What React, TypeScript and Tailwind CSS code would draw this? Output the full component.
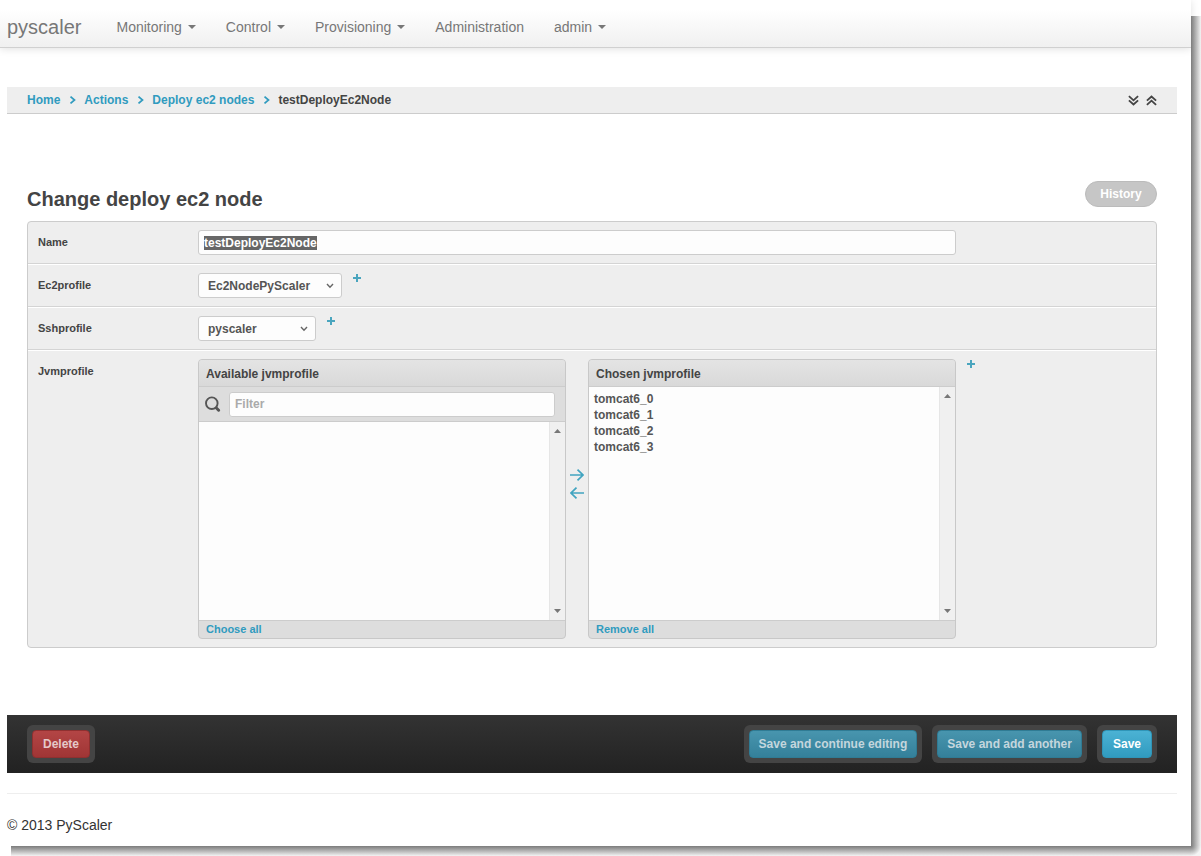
import { useEffect, useRef, type ReactNode } from "react";

const navItems = [
  { label: "Monitoring", menu: true },
  { label: "Control", menu: true },
  { label: "Provisioning", menu: true },
  { label: "Administration", menu: false },
  { label: "admin", menu: true },
];

const crumbs = ["Home", "Actions", "Deploy ec2 nodes"];
const chosen = ["tomcat6_0", "tomcat6_1", "tomcat6_2", "tomcat6_3"];

function Navbar() {
  return (
    <nav className="flex h-12 items-center gap-5 border-b border-[#d0d0d0] bg-linear-to-b from-white from-20% to-[#f0f0f0] pt-[7px] pl-[7px] text-[#777] shadow-[0_1px_8px_rgba(0,0,0,0.12)]">
      <a href="#" className="text-xl leading-10">
        pyscaler
      </a>
      <ul className="flex">
        {navItems.map((item) => (
          <li key={item.label}>
            <a href="#" className="flex items-center gap-1.5 px-[15px] text-sm leading-10">
              {item.label}
              {item.menu && (
                <svg width="8" height="4" viewBox="0 0 8 4" fill="#777" aria-hidden="true">
                  <path d="M0 0h8L4 4z" />
                </svg>
              )}
            </a>
          </li>
        ))}
      </ul>
    </nav>
  );
}

function DoubleChevron({ up }: { up?: boolean }) {
  return (
    <svg width="11" height="11" viewBox="0 0 12 12" fill="none" stroke="#444" strokeWidth="2" aria-hidden="true">
      <path d={up ? "M1 6.2 6 1.6l5 4.6M1 10.8 6 6.2l5 4.6" : "M1 1.2 6 5.8l5-4.6M1 5.8l5 4.6 5-4.6"} />
    </svg>
  );
}

function Breadcrumbs() {
  return (
    <div className="flex h-[27px] items-center justify-between border-b border-[#ccc] bg-[#eee] px-5 text-xs font-bold">
      <ol className="flex items-center">
        {crumbs.map((c) => (
          <li key={c} className="flex items-center">
            <a href="#" className="text-[#309bbf]">
              {c}
            </a>
            <svg className="mr-2 ml-[9px]" width="7" height="8" viewBox="0 0 7 8" fill="none" stroke="#309bbf" strokeWidth="1.7" aria-hidden="true">
              <path d="M1.5 .6 5.5 4 1.5 7.4" />
            </svg>
          </li>
        ))}
        <li className="text-[#444]">testDeployEc2Node</li>
      </ol>
      <div className="flex gap-[7px]">
        <button type="button" aria-label="Expand all">
          <DoubleChevron />
        </button>
        <button type="button" aria-label="Collapse all">
          <DoubleChevron up />
        </button>
      </div>
    </div>
  );
}

function Row({ label, id, children }: { label: string; id: string; children: ReactNode }) {
  return (
    <div className="flex border-t border-b border-t-white border-b-[#d4d4d4] px-2.5 py-2 first:border-t-0 last:border-b-0">
      <label htmlFor={id} className="w-40 shrink-0 pt-1 text-[11px] leading-4 font-bold text-[#444]">
        {label}
      </label>
      <div className="flex min-w-0 flex-1 items-start">{children}</div>
    </div>
  );
}

function AddLink({ label }: { label: string }) {
  return (
    <a href="#" aria-label={label} className="ml-[11px] shrink-0">
      <svg width="8" height="10" viewBox="0 0 8 10" fill="none" stroke="#4aa5be" strokeWidth="2" aria-hidden="true">
        <path d="M0 5h8M4 1v8" />
      </svg>
    </a>
  );
}

function DropDown({ id, value, className }: { id: string; value: string; className: string }) {
  return (
    <div className={`relative ${className}`}>
      <select
        id={id}
        defaultValue={value}
        className="block h-[25px] w-full appearance-none rounded-[3px] border border-[#ccc] bg-[#fdfdfd] px-[9px] text-xs font-bold text-[#555]"
      >
        <option>{value}</option>
      </select>
      <svg className="pointer-events-none absolute top-2.5 right-2" width="8" height="6" viewBox="0 0 8 6" fill="none" stroke="#666" strokeWidth="1.4" aria-hidden="true">
        <path d="M1 1 4 4.2 7 1" />
      </svg>
    </div>
  );
}

function ScrollTrack() {
  return (
    <div className="flex w-4 shrink-0 flex-col items-center justify-between border-l border-[#e6e6e6] bg-[#f0f0f0] py-[7px]" aria-hidden="true">
      <svg width="7" height="4" viewBox="0 0 7 4" fill="#777">
        <path d="M0 4h7L3.5 0z" />
      </svg>
      <svg width="7" height="4" viewBox="0 0 7 4" fill="#777">
        <path d="M0 0h7L3.5 4z" />
      </svg>
    </div>
  );
}

function ListPanel({
  id,
  title,
  action,
  options,
  filter,
}: {
  id: string;
  title: string;
  action: string;
  options: string[];
  filter?: boolean;
}) {
  return (
    <div className="flex h-[280px] max-w-[368px] min-w-0 flex-1 flex-col overflow-hidden rounded-[4px] border border-[#c8c8c8] bg-[#ddd]">
      <h2 className="h-[27px] shrink-0 border-b border-[#ccc] bg-linear-to-b from-[#e4e4e4] to-[#d9d9d9] px-[7px] text-xs leading-7 font-bold text-[#444]">
        {title}
      </h2>
      {filter && (
        <div className="flex h-[35px] shrink-0 items-center gap-2 border-b border-[#ccc] pr-2.5 pl-1.5">
          <svg className="shrink-0" width="16" height="16" viewBox="0 0 16 16" fill="none" stroke="#555" aria-hidden="true">
            <circle cx="6.8" cy="7.2" r="5.8" strokeWidth="1.9" />
            <path d="m11.4 12 2.2 2.2" strokeWidth="3" strokeLinecap="round" />
          </svg>
          <input
            type="text"
            placeholder="Filter"
            aria-label="Filter available jvmprofile"
            className="h-[25px] min-w-0 flex-1 rounded-[3px] border border-[#ccc] bg-[#fdfdfd] px-[5px] text-xs font-bold text-[#555] placeholder:text-[#aaa]"
          />
        </div>
      )}
      <div className="flex min-h-0 flex-1 bg-[#fdfdfd]">
        <select
          id={id}
          multiple
          aria-label={title}
          className="min-w-0 flex-1 appearance-none overflow-hidden px-[5px] py-[5px] text-xs leading-4 font-bold text-[#555] outline-none"
        >
          {options.map((o) => (
            <option key={o} className="h-4 min-h-0 p-0 text-xs leading-4 font-bold">
              {o}
            </option>
          ))}
        </select>
        <ScrollTrack />
      </div>
      <div className="h-[18px] shrink-0 border-t border-[#ccc] px-[7px] text-[11px] leading-[17px] font-bold">
        <a href="#" className="text-[#309bbf]">
          {action}
        </a>
      </div>
    </div>
  );
}

function Arrow({ left }: { left?: boolean }) {
  return (
    <svg width="14" height="12" viewBox="0 0 14 12" fill="none" stroke="#41a4c0" strokeWidth="1.7" aria-hidden="true">
      <path d={left ? "M14 6H1M6.5 .6 1 6l5.5 5.4" : "M0 6h13M7.5 .6 13 6l-5.5 5.4"} />
    </svg>
  );
}

function ActionButton({ children, tone }: { children: ReactNode; tone: string }) {
  return (
    <div className="rounded-[6px] bg-[#444] p-[5px]">
      <button type="button" className={`block h-7 rounded-[4px] border text-xs font-bold ${tone}`}>
        {children}
      </button>
    </div>
  );
}

const muted = "border-[#2f7b94] bg-linear-to-b from-[#4895ae] to-[#34809a] px-[9px] text-[#c4d6dd]";

export default function App() {
  const nameRef = useRef<HTMLInputElement>(null);

  useEffect(() => {
    nameRef.current?.focus();
    nameRef.current?.select();
  }, []);

  return (
    <div className="grid min-h-screen grid-cols-[minmax(0,1fr)_10px] grid-rows-[1fr_10px] bg-white font-['Liberation_Sans',Arial,sans-serif]">
      <div>
        <Navbar />
        <main className="pt-[39px] pr-3.5 pl-[7px]">
          <Breadcrumbs />
          <form className="px-5 pt-[67px]" onSubmit={(e) => e.preventDefault()}>
            <div className="flex h-10 items-start justify-between">
              <h1 className="pt-1.5 text-xl leading-6 font-bold text-[#444]">Change deploy ec2 node</h1>
              <button type="button" className="h-[26px] w-[72px] rounded-full border border-[#bbb] bg-[#c6c6c6] text-xs font-bold text-white">
                History
              </button>
            </div>
            <div className="rounded-[4px] border border-[#ccc] bg-[#eee]">
              <Row label="Name" id="name">
                <input
                  ref={nameRef}
                  id="name"
                  type="text"
                  defaultValue="testDeployEc2Node"
                  className="h-[25px] w-full max-w-[758px] rounded-[3px] border border-[#ccc] bg-[#fdfdfd] px-[5px] text-xs font-bold text-[#555] outline-none selection:bg-[#666] selection:text-white"
                />
              </Row>
              <Row label="Ec2profile" id="ec2profile">
                <DropDown id="ec2profile" value="Ec2NodePyScaler" className="w-36" />
                <AddLink label="Add ec2profile" />
              </Row>
              <Row label="Sshprofile" id="sshprofile">
                <DropDown id="sshprofile" value="pyscaler" className="w-[118px]" />
                <AddLink label="Add sshprofile" />
              </Row>
              <Row label="Jvmprofile" id="chosen">
                <ListPanel id="available" title="Available jvmprofile" action="Choose all" options={[]} filter />
                <div className="flex w-[22px] shrink-0 flex-col items-center gap-1.5 pt-[110px]">
                  <button type="button" aria-label="Choose">
                    <Arrow />
                  </button>
                  <button type="button" aria-label="Remove">
                    <Arrow left />
                  </button>
                </div>
                <ListPanel id="chosen" title="Chosen jvmprofile" action="Remove all" options={chosen} />
                <AddLink label="Add jvmprofile" />
              </Row>
            </div>
          </form>
          <div className="mt-[67px] flex h-[58px] items-center justify-between bg-linear-to-b from-[#333] to-[#222] px-5">
            <ActionButton tone="border-[#8f3030] bg-linear-to-b from-[#b34545] to-[#a03535] px-2.5 text-[#e5c9c9]">Delete</ActionButton>
            <div className="flex gap-2.5">
              <ActionButton tone={muted}>Save and continue editing</ActionButton>
              <ActionButton tone={muted}>Save and add another</ActionButton>
              <ActionButton tone="border-[#2f95b8] bg-linear-to-b from-[#4bb2d4] to-[#309bbf] px-2.5 text-white">Save</ActionButton>
            </div>
          </div>
          <footer className="mt-5 border-t border-[#eee] pt-[21px] pb-2.5 text-sm text-[#333]">© 2013 PyScaler</footer>
        </main>
      </div>
      <div className="mt-4 bg-linear-to-r from-[#7c7c7c] to-[#f4f4f4]" />
      <div className="ml-[11px] bg-linear-to-b from-[#7c7c7c] to-[#f4f4f4]" />
      <div className="bg-radial-[at_0%_0%] from-[#7c7c7c] to-[#f4f4f4] to-70%" />
    </div>
  );
}
